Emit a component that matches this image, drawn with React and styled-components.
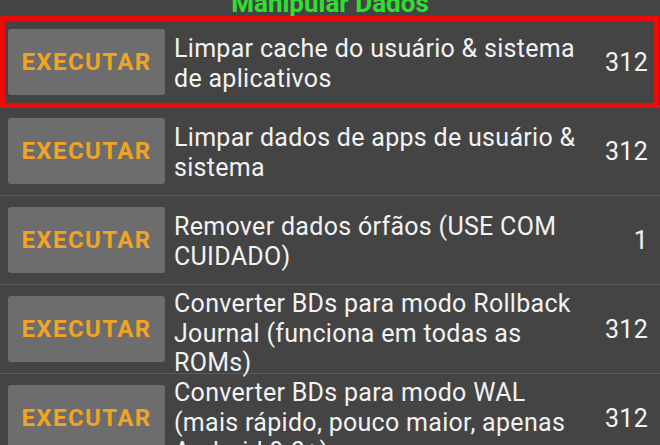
import React from 'react';
import styled, {createGlobalStyle} from 'styled-components';

const GlobalStyle = createGlobalStyle`
  html, body {
    margin: 0;
    padding: 0;
    background: #444444;
    overflow: hidden;
  }
  body {
    font-family: Roboto, "Noto Sans", sans-serif;
  }
`;

const Screen = styled.div`
  position: relative;
  width: 660px;
  height: 445px;
  overflow: hidden;
  background: #444444;
`;

const Title = styled.div`
  margin-top: -9px;
  height: 27px;
  text-align: center;
  color: #2ee02e;
  font-weight: 700;
  font-size: 26px;
  line-height: 24px;
`;

const List = styled.div`
  display: flex;
  flex-direction: column;
`;

const Row = styled.div`
  display: flex;
  align-items: center;
  height: 89px;
  border-bottom: 1px solid #5c5c5c;
  padding: 0 12px 0 8px;
  box-sizing: border-box;
`;

const RunButton = styled.button`
  flex: 0 0 157px;
  height: 66px;
  margin: 0;
  border: none;
  border-radius: 3px;
  background: #6d6d6d;
  color: #f2a324;
  font-family: Roboto, sans-serif;
  font-weight: 700;
  font-size: 24px;
  letter-spacing: 1.4px;
  padding: 0;
  cursor: pointer;
`;

const Label = styled.div`
  flex: 1;
  margin-left: 9px;
  margin-top: ${props => props.$lines === 3 ? '9px' : '3px'};
  color: #f2f2f2;
  font-size: 25px;
  letter-spacing: 0.3px;
  line-height: 29.5px;
`;

const Count = styled.div`
  flex: 0 0 auto;
  margin-left: 12px;
  color: #f2f2f2;
  font-size: 25px;
  letter-spacing: 0.3px;
  text-align: right;
`;

const Highlight = styled.div`
  position: absolute;
  left: 0;
  top: 16px;
  width: 659px;
  height: 92px;
  box-sizing: border-box;
  border: 5px solid #ee0a0a;
  pointer-events: none;
`;

const items = [
  {label: 'Limpar cache do usuário & sistema de aplicativos', count: 312, lines: 2},
  {label: 'Limpar dados de apps de usuário & sistema', count: 312, lines: 2},
  {label: 'Remover dados órfãos (USE COM CUIDADO)', count: 1, lines: 2},
  {label: 'Converter BDs para modo Rollback Journal (funciona em todas as ROMs)', count: 312, lines: 3},
  {label: 'Converter BDs para modo WAL (mais rápido, pouco maior, apenas Android 9.0+)', count: 312, lines: 3},
];

export default function App() {
  return (
    <>
      <GlobalStyle />
      <Screen>
        <Title>Manipular Dados</Title>
        <List>
          {items.map((item, i) => (
            <Row key={i}>
              <RunButton>EXECUTAR</RunButton>
              <Label $lines={item.lines}>{item.label}</Label>
              <Count>{item.count}</Count>
            </Row>
          ))}
        </List>
        <Highlight />
      </Screen>
    </>
  );
}
